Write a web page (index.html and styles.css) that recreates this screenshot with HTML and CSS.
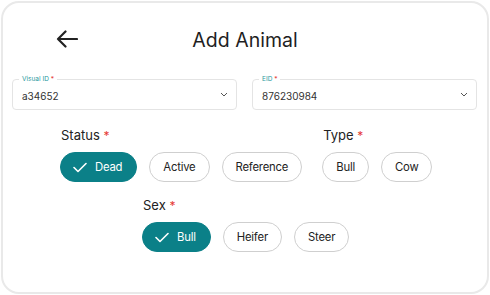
FILE: index.html
```html
<!DOCTYPE html>
<html lang="en">
<head>
    <meta charset="UTF-8">
    <meta name="viewport" content="width=device-width, initial-scale=1.0">
    <title>Add Animal</title>
    <link rel="stylesheet" href="styles.css">
</head>
<body>
    <div class="card">
        <div class="header">
            <svg class="back" width="22" height="18" viewBox="0 0 22 18">
                <path d="M21 9H2M9.5 1.5L2 9l7.5 7.5" fill="none" stroke="#222" stroke-width="2.2" stroke-linecap="round" stroke-linejoin="round"/>
            </svg>
            <div class="title">Add Animal</div>
        </div>

        <div class="fields">
            <div class="field">
                <span class="field-label">Visual ID <span class="req">*</span></span>
                <span class="field-value">a34652</span>
                <svg class="chevron" width="8" height="5" viewBox="0 0 8 5"><path d="M1 1l3 3 3-3" fill="none" stroke="#555" stroke-width="1"/></svg>
            </div>
            <div class="field">
                <span class="field-label">EID <span class="req">*</span></span>
                <span class="field-value">876230984</span>
                <svg class="chevron" width="8" height="5" viewBox="0 0 8 5"><path d="M1 1l3 3 3-3" fill="none" stroke="#555" stroke-width="1"/></svg>
            </div>
        </div>

        <div class="row row-first">
            <div class="group">
                <div class="label">Status <span class="req">*</span></div>
                <div class="chips">
                    <div class="chip selected">
                        <svg width="14" height="11" viewBox="0 0 14 11"><path d="M1 5.5l4 4 8-8" fill="none" stroke="#fff" stroke-width="1.6" stroke-linecap="round" stroke-linejoin="round"/></svg>
                        Dead
                    </div>
                    <div class="chip">Active</div>
                    <div class="chip">Reference</div>
                </div>
            </div>
            <div class="group">
                <div class="label">Type <span class="req">*</span></div>
                <div class="chips">
                    <div class="chip">Bull</div>
                    <div class="chip">Cow</div>
                </div>
            </div>
        </div>

        <div class="row row-second">
            <div class="group">
                <div class="label">Sex <span class="req">*</span></div>
                <div class="chips">
                    <div class="chip selected">
                        <svg width="14" height="11" viewBox="0 0 14 11"><path d="M1 5.5l4 4 8-8" fill="none" stroke="#fff" stroke-width="1.6" stroke-linecap="round" stroke-linejoin="round"/></svg>
                        Bull
                    </div>
                    <div class="chip">Heifer</div>
                    <div class="chip">Steer</div>
                </div>
            </div>
        </div>
    </div>
</body>
</html>
```

FILE: styles.css
```css
body {
    margin: 0;
    background: #fff;
    font-family: Inter, "Noto Sans", sans-serif;
    color: #222;
}
.card {
    margin: 1px;
    border: 2px solid #e9e9e9;
    border-radius: 18px;
    box-sizing: border-box;
    height: 293px;
}
.header {
    display: flex;
    align-items: center;
    height: 40px;
    margin-top: 17px;
    padding-left: 53px;
    padding-right: 75px;
}
.back {
    flex: none;
    margin-top: -2px;
}
.title {
    flex: 1;
    text-align: center;
    font-size: 19.5px;
    font-weight: 400;
    color: #1f1f1f;
}
.fields {
    display: flex;
    gap: 15px;
    padding: 0 9px;
    margin-top: 19px;
}
.field {
    position: relative;
    width: 225px;
    height: 31px;
    box-sizing: border-box;
    border: 1px solid #e4e4e4;
    border-radius: 4px;
    display: flex;
    align-items: center;
    padding: 2px 8px 0 9px;
}
.field-label {
    position: absolute;
    left: 6px;
    top: -6px;
    background: #fff;
    padding: 0 3px;
    font-size: 6.5px;
    color: #2b9a9e;
    line-height: 10px;
}
.field-value {
    flex: 1;
    font-size: 10px;
    color: #333;
}
.chevron {
    margin-top: -3px;
}
.req {
    color: #e53935;
}
.row {
    display: flex;
    gap: 20px;
}
.row-first {
    padding-left: 57px;
    margin-top: 17px;
}
.row-second {
    padding-left: 139px;
    margin-top: 15px;
}
.label {
    font-size: 13px;
    line-height: 16px;
    margin-left: 1px;
    margin-bottom: 8px;
}
.label .req {
    font-size: 12px;
}
.chips {
    display: flex;
    gap: 12px;
}
.chip {
    height: 30px;
    box-sizing: border-box;
    border: 1px solid #cfcfcf;
    border-radius: 15px;
    padding: 0 13px;
    display: flex;
    align-items: center;
    gap: 8px;
    font-size: 11.3px;
    letter-spacing: -0.2px;
    color: #222;
}
.chip.selected {
    background: #0b8088;
    border-color: #0b8088;
    color: #fff;
    padding-left: 12px;
    padding-right: 14px;
}
```
